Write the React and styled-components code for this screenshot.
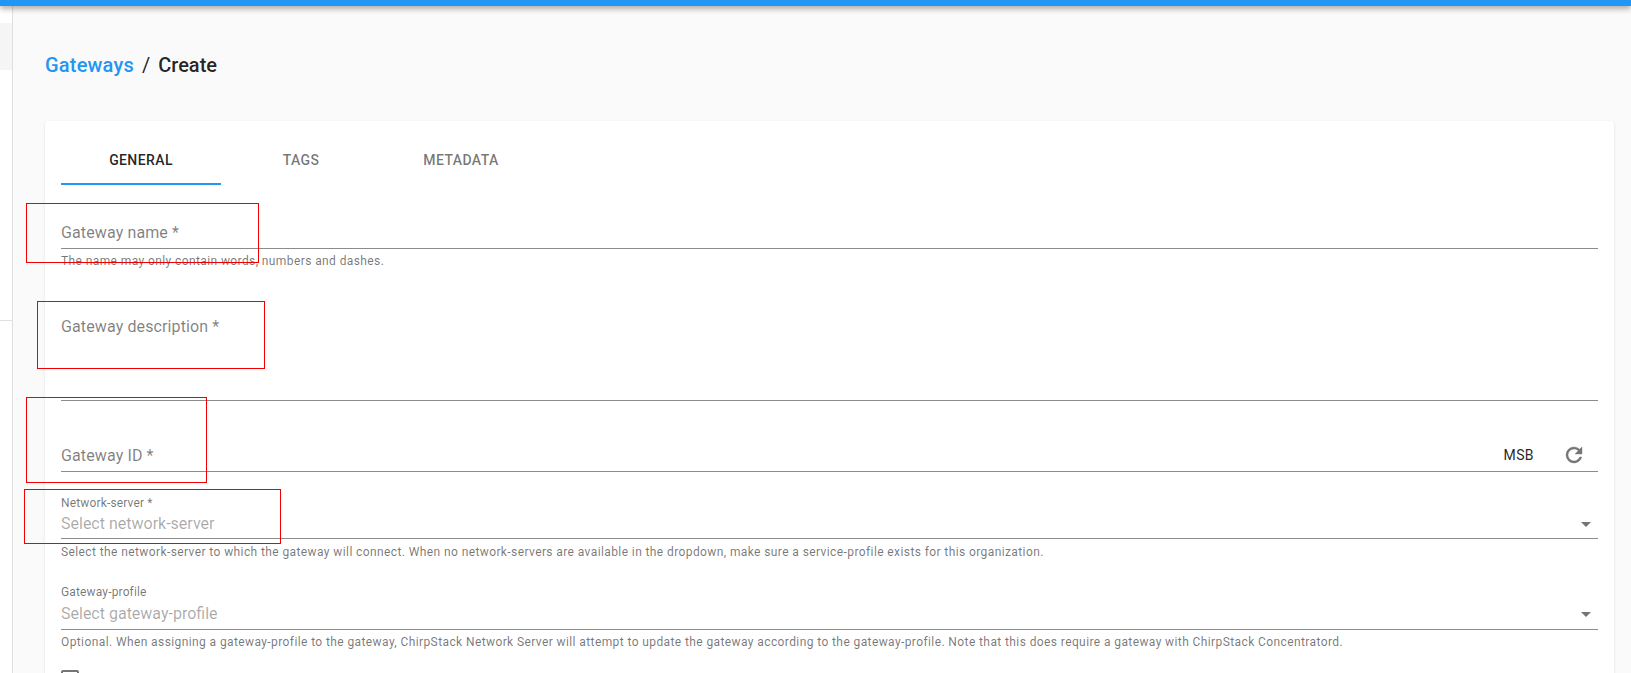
import React from "react";
import styled, { createGlobalStyle } from "styled-components";

const GlobalStyle = createGlobalStyle`
  html, body {
    margin: 0;
    height: 100%;
    overflow: hidden;
    background: #fafafa;
    font-family: Roboto, "Liberation Sans", sans-serif;
  }
`;

const Page = styled.div`
  position: relative;
  height: 673px;
  overflow: hidden;
`;
const TopBar = styled.div`
  position: relative;
  z-index: 2;
  height: 6px;
  background: #2196f3;
  box-shadow: 0 2px 4px -1px rgba(0,0,0,.2), 0 4px 5px 0 rgba(0,0,0,.14), 0 1px 10px 0 rgba(0,0,0,.12);
`;
const Body = styled.div`
  display: flex;
  height: 667px;
`;
const Sidebar = styled.aside`
  flex: 0 0 12px;
  background: #fff;
  border-right: 1px solid #e0e0e0;
  padding-top: 17px;
`;
const ActiveItem = styled.div`
  height: 47px;
  background: #f5f5f5;
`;
const SideDivider = styled.div`
  height: 1px;
  margin-top: 250px;
  background: #e0e0e0;
`;
const Main = styled.main`
  flex: 1;
  min-width: 0;
  padding: 47px 17px 0 32px;
`;
const Crumbs = styled.div`
  display: flex;
  gap: 8px;
  font-size: 20px;
  font-weight: 500;
  line-height: 24px;
  color: rgba(0,0,0,.87);
`;
const CrumbLink = styled.span`
  color: #2196f3;
  letter-spacing: .2px;
`;
const CrumbSep = styled.span`
  font-weight: 400;
`;
const Card = styled.section`
  margin-top: 44px;
  padding: 16px;
  height: 600px;
  background: #fff;
  border-radius: 4px;
  box-shadow: 0 1px 3px 0 rgba(0,0,0,.1), 0 1px 1px 0 rgba(0,0,0,.05);
`;
const Tabs = styled.div`
  display: flex;
  height: 48px;
`;
const Tab = styled.div`
  width: 160px;
  box-sizing: border-box;
  display: flex;
  align-items: center;
  justify-content: center;
  font-size: 14px;
  font-weight: 500;
  letter-spacing: .4px;
  color: ${p => (p.$active ? "rgba(0,0,0,.87)" : "rgba(0,0,0,.54)")};
  border-bottom: 2px solid ${p => (p.$active ? "#2196f3" : "transparent")};
`;
const Field = styled.div`
  margin-top: ${p => p.$top}px;
`;
const Control = styled.div`
  height: ${p => p.$height}px;
  display: flex;
  align-items: ${p => (p.$alignTop ? "flex-start" : "flex-end")};
  justify-content: space-between;
  border-bottom: 1px solid #8c8c8c;
  box-sizing: content-box;
`;
const Placeholder = styled.span`
  font-size: 16px;
  line-height: 24px;
  letter-spacing: .12px;
  color: rgba(0,0,0,.5);
  padding-bottom: 3px;
`;
const SmallLabel = styled.div`
  font-size: 12px;
  line-height: 14px;
  color: rgba(0,0,0,.54);
  letter-spacing: .15px;
`;
const SelectControl = styled(Control)`
  align-items: center;
`;
const SelectValue = styled.span`
  font-size: 16px;
  line-height: 24px;
  color: rgba(0,0,0,.34);
`;
const Helper = styled.p`
  margin: ${p => p.$gap ?? 6}px 0 0;
  font-size: 12px;
  line-height: 14px;
  letter-spacing: .4px;
  color: rgba(0,0,0,.54);
`;
const Adornment = styled.div`
  display: flex;
  align-items: center;
  gap: 28px;
  padding-right: 12px;
  margin-bottom: 4px;
`;
const ByteOrder = styled.span`
  font-size: 14px;
  font-weight: 400;
  letter-spacing: .4px;
  color: rgba(0,0,0,.87);
`;
const Check = styled.div`
  margin-top: 21px;
  width: 14px;
  height: 14px;
  border: 2px solid #757575;
  border-radius: 2px;
`;
const Mark = styled.div`
  position: absolute;
  z-index: 3;
  left: ${p => p.$x}px;
  top: ${p => p.$y}px;
  width: ${p => p.$w}px;
  height: ${p => p.$h}px;
  border: 1px solid #f00000;
  box-sizing: border-box;
`;

const RefreshIcon = () => (
  <svg width="24" height="24" viewBox="0 0 24 24" fill="#757575" stroke="#757575" strokeWidth=".4">
    <path d="M17.65,6.35C16.2,4.9 14.21,4 12,4A8,8 0 0,0 4,12A8,8 0 0,0 12,20C15.73,20 18.84,17.45 19.73,14H17.65C16.83,16.33 14.61,18 12,18A6,6 0 0,1 6,12A6,6 0 0,1 12,6C13.66,6 15.14,6.69 16.22,7.78L13,11H20V4L17.65,6.35Z" />
  </svg>
);

const CaretIcon = () => (
  <svg width="24" height="24" viewBox="0 0 24 24" fill="#757575">
    <path d="M7 10l5 5 5-5z" />
  </svg>
);

const marks = [
  { x: 26, y: 203, w: 233, h: 60 },
  { x: 37, y: 301, w: 228, h: 68 },
  { x: 26, y: 397, w: 181, h: 86 },
  { x: 24, y: 489, w: 257, h: 55 },
];

export default function App() {
  return (
    <Page>
      <GlobalStyle />
      <TopBar />
      <Body>
        <Sidebar>
          <ActiveItem />
          <SideDivider />
        </Sidebar>
        <Main>
          <Crumbs>
            <CrumbLink>Gateways</CrumbLink>
            <CrumbSep>/</CrumbSep>
            <span>Create</span>
          </Crumbs>
          <Card>
            <Tabs>
              <Tab $active>GENERAL</Tab>
              <Tab>TAGS</Tab>
              <Tab>METADATA</Tab>
            </Tabs>
            <Field $top={31}>
              <Control $height={32}>
                <Placeholder>Gateway name *</Placeholder>
              </Control>
              <Helper $gap={5}>The name may only contain words, numbers and dashes.</Helper>
            </Field>
            <Field $top={47}>
              <Control $height={85} $alignTop>
                <Placeholder>Gateway description *</Placeholder>
              </Control>
            </Field>
            <Field $top={30}>
              <Control $height={40}>
                <Placeholder>Gateway ID *</Placeholder>
                <Adornment>
                  <ByteOrder>MSB</ByteOrder>
                  <RefreshIcon />
                </Adornment>
              </Control>
            </Field>
            <Field $top={24}>
              <SmallLabel>Network-server *</SmallLabel>
              <SelectControl $height={28}>
                <SelectValue>Select network-server</SelectValue>
                <CaretIcon />
              </SelectControl>
              <Helper>Select the network-server to which the gateway will connect. When no network-servers are available in the dropdown, make sure a service-profile exists for this organization.</Helper>
            </Field>
            <Field $top={26}>
              <SmallLabel>Gateway-profile</SmallLabel>
              <SelectControl $height={30}>
                <SelectValue>Select gateway-profile</SelectValue>
                <CaretIcon />
              </SelectControl>
              <Helper $gap={5}>Optional. When assigning a gateway-profile to the gateway, ChirpStack Network Server will attempt to update the gateway according to the gateway-profile. Note that this does require a gateway with ChirpStack Concentratord.</Helper>
            </Field>
            <Check />
          </Card>
        </Main>
      </Body>
      {marks.map(m => (
        <Mark key={m.y} $x={m.x} $y={m.y} $w={m.w} $h={m.h} />
      ))}
    </Page>
  );
}
